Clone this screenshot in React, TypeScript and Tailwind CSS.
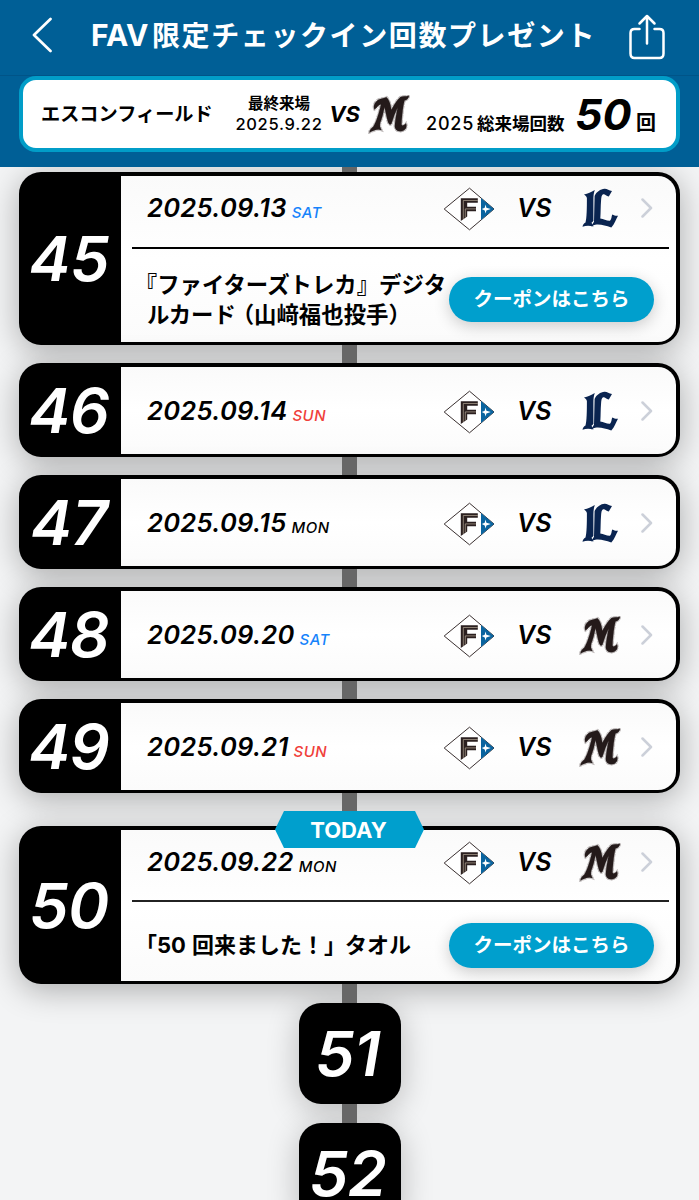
import React from "react";

const JP = "font-['Inter','Noto_Sans_CJK_JP',sans-serif]";

function FightersLogo() {
  return (
    <svg viewBox="0 0 52 44" className="mt-[2px] h-[44px] w-[52px] shrink-0">
      <path d="M1.2 22 26.500 1.200 51 22 26.500 42.800Z" fill="#fff" stroke="#3a3030" strokeWidth="1" />
      <path d="M38 11 51 22 38 33Z" fill="#0a649f" />
      <path d="M42.600 17.500 43.400 20.800 47.800 22.100 43.400 23.400 42.600 26.500 41.700 23.400 38.800 22.100 41.700 20.800Z" fill="#fff" />
      <path d="M17.800 34V11.300H34.800V15.800H24.200V19.700H33V24.200H24.200V29.500L17.800 34Z" fill="#2b2020" />
      <path d="M20.300 32V13.500H34.800M22.300 30.500V21.900H33" fill="none" stroke="#cbbdaa" strokeWidth="0.600" />
    </svg>
  );
}

function LionsLogo() {
  return (
    <svg viewBox="0 0 36 40" className="h-[40px] w-[36px] shrink-0">
      <path
        d="M2 6.500C6 5.500 9 4 12.800 2C11.700 5 11.400 8 11.400 11.500V33L9.500 34.700C10.300 36 10.700 37 11.500 38.500C7.500 37.500 4 37.500 .500 38.700C1 36.700 1.700 35.500 3.500 34.500C4.800 30 4.900 20 4.900 10C4.400 8 3.500 7.500 2 6.500Z"
        fill="#0a2450"
      />
      <path
        d="M12.600 8C14.500 3.800 18.500 1.200 22.500 .800C25 .600 27 2.800 30 3L26.800 8.500C24 7.700 23 5.800 21 6.300C19.500 7.300 19.300 9.500 19.100 12C18.500 19 18.800 25 18.300 30.500C21.500 31 25 33 28 32.700C29.800 31 29.300 28.500 30.300 26.500C32.500 27.700 34 28 36 27.700C33.700 31.500 32.700 35.700 29.300 39.500C24 37.800 20 36.300 14.800 36.500C12.500 36.700 10.800 37.500 9 38.500L12 33.700Z"
        fill="#0a2450"
      />
    </svg>
  );
}

function MarinesLogo() {
  const shape =
    "M6.500 14.500C4.800 11 7 6 11.500 4.200C14 3.200 16.500 3.200 18.500 2.200C21.500 5 22.700 10 23.300 15C26 10 29 5 32.500 2C35 .700 38 1.800 41 .700C40.500 4 38.500 5 36.500 5.500C35 11 34 20 33.500 29C33.700 31.500 36 30.500 38 28.300C39.500 33 36.800 36.500 32 36.200C27.900 36 26.500 33.500 26.900 29.500C27.500 23.500 28.500 17.500 29.700 12.500C27.300 17.500 25.200 23 23.500 28.500C22.800 30.500 21 29.500 20.200 27.500C18.800 23 17.700 17 16.500 12C15.500 17.500 14 23 12.300 27.500C11.300 31 12.300 32.500 13.500 35.200C9 33.500 6 35.500 1.500 37.500C1.700 34.500 3.700 33.200 5.200 31.800C8.500 26.500 11 18 13 9.500C10.500 9.500 9.800 12 6.500 14.500Z";
  return (
    <svg viewBox="0 0 42 39" className="h-[39px] w-[42px] shrink-0">
      <path d={shape} fill="none" stroke="#b3adad" strokeWidth="2.400" strokeDasharray="4 .7" />
      <path d={shape} fill="#241a1a" stroke="#fff" strokeWidth="1.300" />
      <path d={shape} fill="#241a1a" stroke="#241a1a" strokeWidth="0.500" />
    </svg>
  );
}

function Chevron() {
  return (
    <svg viewBox="0 0 12 20" className="h-[20px] w-[12px] shrink-0">
      <path d="M1.500 1.500 10 10 1.500 18.500" fill="none" stroke="#ccd0d9" strokeWidth="2.500" strokeLinecap="round" strokeLinejoin="round" />
    </svg>
  );
}

const dayColor = { SAT: "text-[#1683fb]", SUN: "text-[#f0403a]", MON: "text-black" };

type Game = { date: string; day: keyof typeof dayColor; rival: "L" | "M" };

function GameRow({ date, day, rival }: Game) {
  return (
    <div className="flex h-[44px] items-center">
      <div className="flex w-[295px] items-baseline gap-[5px] pl-[26px] italic">
        <span className="text-[25.500px] leading-[44px] font-semibold tracking-[0.300px]">{date}</span>
        <span className={"relative top-px text-[15px] leading-[20px] font-medium tracking-[0.500px] " + dayColor[day]}>{day}</span>
      </div>
      <div className="flex w-[80px] justify-end pr-[1px]">
        <FightersLogo />
      </div>
      <div className="w-[73px] pl-[21px] text-[25px] leading-[44px] font-semibold italic">VS</div>
      <div className="flex w-[62px] justify-center">{rival === "L" ? <LionsLogo /> : <MarinesLogo />}</div>
      <div className="pl-[10px]">
        <Chevron />
      </div>
    </div>
  );
}

function Card({ n, children, className }: { n: number; children: React.ReactNode; className: string }) {
  return (
    <section
      className={
        "relative mx-[19px] flex shrink-0 rounded-[22px] border-x-[4px] border-t-[4px] border-b-[3px] border-black bg-black shadow-[0_6px_32px_rgba(0,0,0,0.3)] " +
        className
      }
    >
      <div className="flex w-[98px] shrink-0 items-center justify-center pr-[6px] pb-[1px] text-[62.500px] leading-none font-semibold tracking-[-0.500px] text-white italic">
        {n}
      </div>
      <div className="flex min-w-0 flex-1 flex-col rounded-r-[18px] bg-gradient-to-b from-[#fafafa] via-white to-[#fbfbfb]">{children}</div>
    </section>
  );
}

function Coupon() {
  return (
    <button className="flex h-[45px] w-[205px] shrink-0 items-center justify-center rounded-full bg-[#009fcd] text-[19.500px] font-bold whitespace-nowrap text-white shadow-[0_4px_16px_rgba(0,0,0,0.2)]">
      クーポンはこちら
    </button>
  );
}

function NumberTile({ n }: { n: number }) {
  return (
    <div className="flex h-[101px] w-[102px] shrink-0 items-center justify-center self-center rounded-[22px] bg-black pr-[4px] pb-[1px] text-[62.500px] leading-none font-semibold tracking-[-0.500px] text-white italic shadow-[0_6px_32px_rgba(0,0,0,0.24)]">
      {n}
    </div>
  );
}

const Line = ({ className }: { className: string }) => (
  <div className={"relative z-[1] w-[15px] shrink-0 self-center bg-[#676767] " + className} />
);

const half = "[font-feature-settings:'halt']";

export default function App() {
  return (
    <div className={"flex h-[1200px] w-[699px] flex-col overflow-hidden bg-[#f3f4f5] text-black " + JP}>
      <header className="relative z-10 h-[167px] shrink-0 bg-[#005f96]">
        <div className="flex h-[76px] items-center border-b border-[#005488] pb-[5px]">
          <svg viewBox="0 0 20 36" className="ml-[32px] h-[36px] w-[20px]">
            <path d="M18.500 2 2 18 18.500 34" fill="none" stroke="#fff" strokeWidth="2.700" strokeLinecap="round" strokeLinejoin="round" />
          </svg>
          <h1 className="ml-[39px] flex h-[40px] w-[505px] items-baseline font-semibold whitespace-nowrap text-white">
            <span className="w-[63px] text-[30px] leading-[40px] font-bold">FAV</span>
            <span className="text-[28px] leading-[40px] font-bold tracking-[1.600px]">限定チェックイン回数プレゼント</span>
          </h1>
          <svg viewBox="0 0 38 46" className="mt-[3px] ml-[32px] h-[46px] w-[38px]">
            <path d="M11.500 15H6.500Q2.500 15 2.500 19V39.500Q2.500 44 6.500 44H31.500Q35.500 44 35.500 39.500V19Q35.500 15 31.500 15H26.500M19 29.500V2.500M11.500 9.500 19 2 26.500 9.500" fill="none" stroke="#fff" strokeWidth="2.500" strokeLinecap="round" strokeLinejoin="round" />
          </svg>
        </div>
        <div className="mx-[19px] flex h-[76px] items-center rounded-[17px] border-[4px] border-[#019dc8] bg-white">
          <div className="w-[212px] pl-[18px] text-[19.200px] leading-[24px] font-bold whitespace-nowrap">エスコンフィールド</div>
          <div className="flex w-[88px] flex-col items-center whitespace-nowrap">
            <span className="text-[15.500px] leading-[20px] font-bold">最終来場</span>
            <span className="text-[16.500px] leading-[20px] font-medium tracking-[0.700px]">2025.9.22</span>
          </div>
          <div className="w-[37px] text-right text-[22px] leading-[30px] font-bold italic">VS</div>
          <div className="ml-[8px] w-[58px]">
            <MarinesLogo />
          </div>
          <div className="flex items-baseline whitespace-nowrap">
            <span className="w-[51px] text-[18px] font-medium tracking-[0.800px]">2025</span>
            <span className="w-[98px] text-[17.500px] font-bold">総来場回数</span>
            <span className="w-[61px] text-[43px] leading-[50px] font-bold italic">50</span>
            <span className="text-[20px] font-bold">回</span>
          </div>
        </div>
      </header>

      <Line className="h-[5px]" />
      <Card n={45} className="h-[173px]">
        <div className="pt-[10px]">
          <GameRow date="2025.09.13" day="SAT" rival="L" />
        </div>
        <div className="mt-[17px] mr-[7px] ml-[11px] h-[2px] shrink-0 bg-black" />
        <div className="flex pt-[21px] pl-[26px]">
          <div className="w-[302px] text-[22.400px] leading-[30px] font-bold whitespace-nowrap">
            <div className="-ml-[1px]">
              <span className={half}>『</span>ファイターズトレカ<span className={half}>』</span>
              <span className="ml-[11px] tracking-[0.300px]">デジタ</span>
            </div>
            <div>
              ルカード<span className={"ml-[7px] " + half}>（</span>山﨑福也投手<span className={half}>）</span>
            </div>
          </div>
          <div className="pt-[7px]">
            <Coupon />
          </div>
        </div>
      </Card>
      <Line className="h-[18px]" />
      <Card n={46} className="h-[94px]">
        <div className="pt-[22px]">
          <GameRow date="2025.09.14" day="SUN" rival="L" />
        </div>
      </Card>
      <Line className="h-[18px]" />
      <Card n={47} className="h-[94px]">
        <div className="pt-[22px]">
          <GameRow date="2025.09.15" day="MON" rival="L" />
        </div>
      </Card>
      <Line className="h-[18px]" />
      <Card n={48} className="h-[94px]">
        <div className="pt-[22px]">
          <GameRow date="2025.09.20" day="SAT" rival="M" />
        </div>
      </Card>
      <Line className="h-[18px]" />
      <Card n={49} className="h-[94px]">
        <div className="pt-[22px]">
          <GameRow date="2025.09.21" day="SUN" rival="M" />
        </div>
      </Card>
      <Line className="h-[33px]" />
      <Card n={50} className="h-[158px]">
        <div className="absolute -top-[19px] left-[252px] z-[2] flex h-[37px] w-[149px] items-center justify-center bg-[#009fcd] pt-[2px] pr-[2px] text-[22px] font-bold text-white [clip-path:polygon(9px_0,140px_0,100%_50%,140px_100%,9px_100%,0_50%)]">
          TODAY
        </div>
        <div className="pt-[10px]">
          <GameRow date="2025.09.22" day="MON" rival="M" />
        </div>
        <div className="mt-[16px] mr-[7px] ml-[11px] h-[2px] shrink-0 bg-[#222]" />
        <div className="flex items-center pt-[21px] pl-[26px]">
          <div className="w-[302px] pb-[2px] text-[22px] leading-[30px] font-bold whitespace-nowrap">
            <span className={"-ml-[1px] " + half}>「</span>50<span className="ml-[6px]">回来ました！</span>
            <span className={half}>」</span>
            <span className="ml-[10px]">タオル</span>
          </div>
          <Coupon />
        </div>
      </Card>
      <Line className="h-[19px]" />
      <NumberTile n={51} />
      <Line className="h-[19px]" />
      <NumberTile n={52} />
    </div>
  );
}
